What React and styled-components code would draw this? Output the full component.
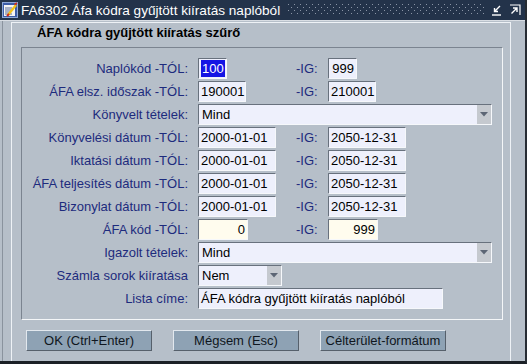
import React from 'react'
import styled, { createGlobalStyle } from 'styled-components'

const GlobalStyle = createGlobalStyle`
    html, body {
        margin: 0;
        padding: 0;
        background: #b6bfc9;
    }
    body {
        font-family: "Liberation Sans", Arial, sans-serif;
    }
`

const Window = styled.div`
    width: 527px;
    height: 364px;
    box-sizing: border-box;
    display: flex;
    flex-direction: column;
    background: #b6bfc9;
    border-right: 2px solid #262c33;
    border-bottom: 3px solid #1b2026;
    overflow: hidden;
`

const TitleBar = styled.div`
    height: 21px;
    flex: none;
    display: flex;
    align-items: center;
    background: #23334a;
    border-bottom: 1px solid #d9dee4;
    box-sizing: border-box;
    padding: 0 4px 0 2px;
`

const TitleText = styled.span`
    color: #fff;
    font-size: 13.6px;
    margin-left: 3px;
    white-space: nowrap;
`

// dotted grip between the caption and the window buttons
const Grip = styled.svg`
    flex: 1;
    min-width: 0;
    height: 14px;
    margin: 0 6px 0 8px;
    overflow: hidden;
`

const Controls = styled.div`
    display: flex;
    gap: 6px;
    align-items: center;
`

const Body = styled.div`
    flex: 1;
    display: flex;
    padding: 0 13px 0 11px;
    background: linear-gradient(to right, transparent 2px, #8a939e 2px, #8a939e 3px, transparent 3px);
`

const Panel = styled.div`
    width: 500px;
    box-sizing: border-box;
    border-left: 1px solid #eef2f6;
    border-top: 1px solid #eef2f6;
    border-right: 1px solid #eef2f6;
    display: flex;
    flex-direction: column;
    margin-top: 1px;
`

const Heading = styled.h1`
    margin: 0;
    padding: 1px 0 0 25px;
    height: 23px;
    font-size: 13px;
    line-height: 18px;
    font-weight: bold;
    color: #000;
`

const GroupBox = styled.div`
    margin-left: 9px;
    width: 482px;
    height: 273px;
    box-sizing: border-box;
    border: 1px solid;
    border-color: #7b8490 #f4f6f8 #f4f6f8 #7b8490;
    padding-top: 10px;
`

const Form = styled.div`
    display: grid;
    grid-template-columns: 166px 1fr;
    column-gap: 10px;
    row-gap: 2px;
    grid-auto-rows: 21px;
    align-items: center;
`

const Label = styled.div`
    text-align: right;
    color: #1d2b7d;
    font-size: 13px;
    white-space: nowrap;
`

const Range = styled.div`
    display: grid;
    grid-template-columns: 98px 32px auto;
    align-items: center;
`

const IgLabel = styled.span`
    color: #1d2b7d;
    font-size: 13px;
`

const Field = styled.div`
    width: ${p => p.w}px;
    height: 21px;
    box-sizing: border-box;
    border: 1px solid;
    border-color: #68717d #f6f8fb #f6f8fb #68717d;
    border-radius: 1px;
    background: ${p => (p.cream ? '#fffcee' : '#eef0fc')};
    color: #000;
    font-size: 13px;
    line-height: 19px;
    padding: 0 2px;
    text-align: ${p => (p.right ? 'right' : 'left')};
    white-space: nowrap;
    overflow: hidden;
`

const Selected = styled.span`
    background: #1414e4;
    color: #fff;
    padding: 1px 1px;
`

const SelectBox = styled.div`
    width: ${p => p.w}px;
    height: 21px;
    box-sizing: border-box;
    display: flex;
    border: 1px solid;
    border-color: #68717d #f6f8fb #f6f8fb #68717d;
    background: #eef0fc;
    color: #000;
    font-size: 13px;
    line-height: 19px;
`

const SelectValue = styled.span`
    flex: 1;
    padding-left: 3px;
`

const Arrow = styled.div`
    width: 14px;
    display: flex;
    align-items: center;
    justify-content: center;
    background: #c5c9cf;
`

const Buttons = styled.div`
    display: flex;
    gap: 21px;
    padding: 10px 0 0 14px;
`

const Button = styled.div`
    width: 126px;
    height: 21px;
    box-sizing: border-box;
    border: 1px solid;
    border-color: #e2e8ee #56606b #56606b #e2e8ee;
    background: #8ea2b4;
    color: #0e1620;
    font-size: 13px;
    line-height: 19px;
    text-align: center;
`

const AppIcon = () => (
    <svg width="16" height="16" viewBox="0 0 16 16">
        <rect x="0.5" y="0.5" width="15" height="15" fill="#3c5da8" stroke="#8ea9d8" />
        <rect x="2" y="3" width="11" height="11" fill="#f4f4f4" />
        <path d="M3 6h7M3 8h6M3 10h5M3 12h7" stroke="#5a6f9a" strokeWidth="1" />
        <path d="M6 13 L14 3" stroke="#f2c21b" strokeWidth="2.4" />
        <path d="M5 14 L7 12" stroke="#d22a1d" strokeWidth="2" />
        <path d="M12.5 2.5 L15 1" stroke="#d22a1d" strokeWidth="1.5" />
    </svg>
)

// grip dots laid out on a 6px lattice, every other row shifted by 3px
const gripDots = []
for (let row = 0; row < 4; row++) {
    for (let x = row % 2 ? 3 : 0; x < 260; x += 6) {
        gripDots.push([x, 1 + row * 3])
    }
}

const Select = ({ w, children }) => (
    <SelectBox w={w}>
        <SelectValue>{children}</SelectValue>
        <Arrow>
            <svg width="8" height="5" viewBox="0 0 8 5">
                <path d="M0 0h8L4 4.5z" fill="#5d6675" />
            </svg>
        </Arrow>
    </SelectBox>
)

const DateRange = ({ from, to }) => (
    <Range>
        <Field w={78}>{from}</Field>
        <IgLabel>-IG:</IgLabel>
        <Field w={78}>{to}</Field>
    </Range>
)

const App = () => {
    return (
        <Window>
            <GlobalStyle />
            <TitleBar>
                <AppIcon />
                <TitleText>FA6302 Áfa kódra gyűjtött kiíratás naplóból</TitleText>
                <Grip shapeRendering="crispEdges">
                    {gripDots.map(([x, y]) => (
                        <rect key={x + '-' + y} x={x} y={y} width="1" height="1" fill="#8a95a6" />
                    ))}
                </Grip>
                <Controls>
                    <svg width="12" height="12" viewBox="0 0 12 12">
                        <path d="M9 2 L3.5 7.5 M3.5 4 V7.5 H7" stroke="#fff" strokeWidth="1.4" fill="none" />
                        <path d="M1 11 H10" stroke="#fff" strokeWidth="1.4" />
                    </svg>
                    <svg width="12" height="12" viewBox="0 0 12 12">
                        <path d="M1 1 H11 V11" stroke="#fff" strokeWidth="1.2" fill="none" />
                        <path d="M2.5 9.5 L8 4 M4 4 H8 V8" stroke="#fff" strokeWidth="1.4" fill="none" />
                    </svg>
                </Controls>
            </TitleBar>
            <Body>
                <Panel>
                    <Heading>ÁFA kódra gyűjtött kiíratás szűrő</Heading>
                    <GroupBox>
                        <Form>
                            <Label>Naplókód -TÓL:</Label>
                            <Range>
                                <Field w={29} right><Selected>100</Selected></Field>
                                <IgLabel>-IG:</IgLabel>
                                <Field w={29} right>999</Field>
                            </Range>

                            <Label>ÁFA elsz. időszak -TÓL:</Label>
                            <Range>
                                <Field w={48}>190001</Field>
                                <IgLabel>-IG:</IgLabel>
                                <Field w={48}>210001</Field>
                            </Range>

                            <Label>Könyvelt tételek:</Label>
                            <Select w={294}>Mind</Select>

                            <Label>Könyvelési dátum -TÓL:</Label>
                            <DateRange from="2000-01-01" to="2050-12-31" />

                            <Label>Iktatási dátum -TÓL:</Label>
                            <DateRange from="2000-01-01" to="2050-12-31" />

                            <Label>ÁFA teljesítés dátum -TÓL:</Label>
                            <DateRange from="2000-01-01" to="2050-12-31" />

                            <Label>Bizonylat dátum -TÓL:</Label>
                            <DateRange from="2000-01-01" to="2050-12-31" />

                            <Label>ÁFA kód -TÓL:</Label>
                            <Range>
                                <Field w={50} right cream>0</Field>
                                <IgLabel>-IG:</IgLabel>
                                <Field w={50} right cream>999</Field>
                            </Range>

                            <Label>Igazolt tételek:</Label>
                            <Select w={294}>Mind</Select>

                            <Label>Számla sorok kiíratása</Label>
                            <Select w={84}>Nem</Select>

                            <Label>Lista címe:</Label>
                            <Field w={245}>ÁFA kódra gyűjtött kiíratás naplóból</Field>
                        </Form>
                    </GroupBox>
                    <Buttons>
                        <Button>OK (Ctrl+Enter)</Button>
                        <Button>Mégsem (Esc)</Button>
                        <Button>Célterület-formátum</Button>
                    </Buttons>
                </Panel>
            </Body>
        </Window>
    )
}

export default App
